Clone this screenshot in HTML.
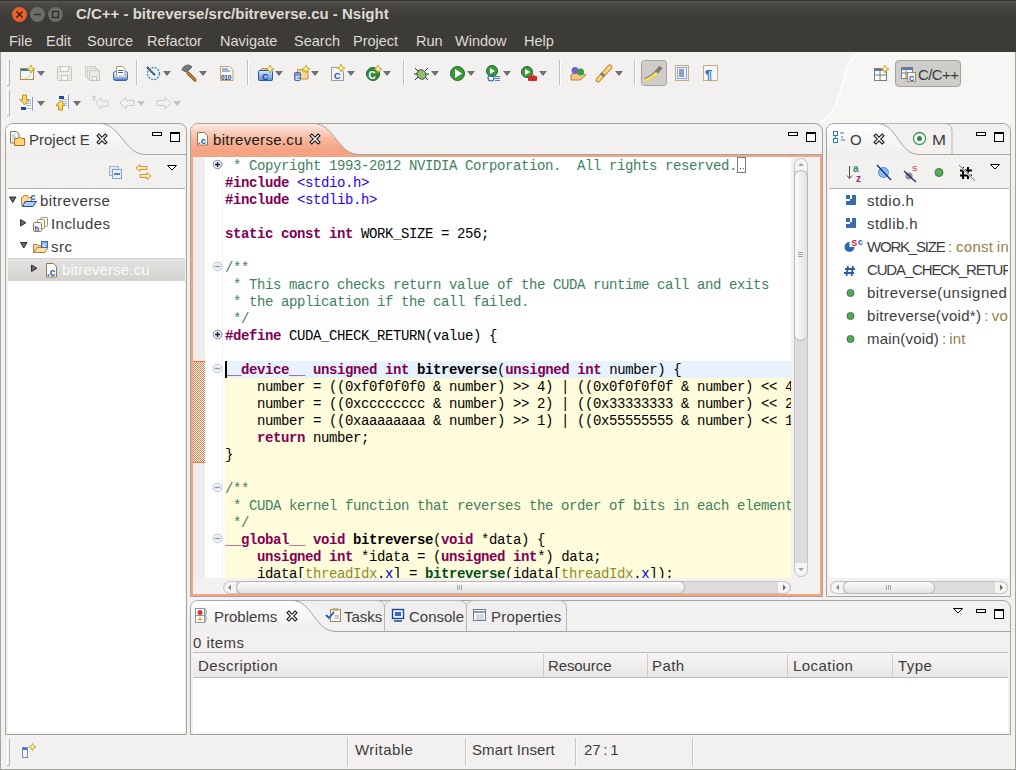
<!DOCTYPE html>
<html><head><meta charset="utf-8">
<style>
*{margin:0;padding:0;box-sizing:border-box}
html,body{width:1016px;height:770px;overflow:hidden;background:#f2f1f0;font-family:"Liberation Sans",sans-serif;position:relative}
.a{position:absolute}
#title{left:0;top:0;width:1016px;height:52px;background:linear-gradient(#353430 0,#353430 1px,#56544f 1px,#56544f 2px,#4a4944 3px,#3c3b37 16px,#3c3b37 52px)}
.wbtn{position:absolute;top:7px;width:15px;height:15px;border-radius:50%}
#ttext{left:76px;top:5px;font-size:15px;font-weight:bold;color:#dfdbd2;white-space:nowrap}
.menu{position:absolute;top:33px;font-size:14.5px;color:#dfdbd2;white-space:nowrap}
.panel{position:absolute;border:1px solid #a8a6a2;background:#fff}
.ui{font-size:15px;letter-spacing:0.45px;color:#3c3c3c;white-space:nowrap;position:absolute}
.code{position:absolute;font-family:"Liberation Mono",monospace;font-size:14px;letter-spacing:-0.4px;white-space:pre;color:#000;line-height:17px}
.k{color:#7f0055;font-weight:bold}
.c{color:#3f7f5f}
.s{color:#2a00ff}
.b{font-weight:bold}
.g{color:#8c8a2c}
.f{color:#0000c0}
.fn{color:#00501e;font-weight:bold}
</style></head><body>
<div id="title" class="a"></div>
<svg class="a" style="left:0;top:0" width="70" height="28">
<circle cx="19.5" cy="14.5" r="7.5" fill="#e8602c"/>
<path d="M16.5 11.5l6 6M22.5 11.5l-6 6" stroke="#3a1a0a" stroke-width="1.3"/>
<circle cx="37.5" cy="14.5" r="7.5" fill="#6e6c67"/>
<path d="M34 14.5h7" stroke="#2e2d2a" stroke-width="1.4"/>
<circle cx="55.5" cy="14.5" r="7.5" fill="#6e6c67"/>
<rect x="52.5" y="11.5" width="6" height="6" fill="none" stroke="#2e2d2a" stroke-width="1.3"/>
</svg>
<div id="ttext" class="a">C/C++ - bitreverse/src/bitreverse.cu - Nsight</div>
<div class="menu" style="left:9px">File</div>
<div class="menu" style="left:46px">Edit</div>
<div class="menu" style="left:87px">Source</div>
<div class="menu" style="left:147px">Refactor</div>
<div class="menu" style="left:220px">Navigate</div>
<div class="menu" style="left:294px">Search</div>
<div class="menu" style="left:353px">Project</div>
<div class="menu" style="left:416px">Run</div>
<div class="menu" style="left:455px">Window</div>
<div class="menu" style="left:524px">Help</div>

<!-- right perspective area -->
<svg class="a" style="left:0;top:52px" width="1016" height="72">
<path d="M820 72 C 845 60, 840 8, 858 2 L1016 2 L1016 72 Z" fill="#f7f6f5"/>
<path d="M820 70 C 845 60, 840 8, 858 2 L1012 2" fill="none" stroke="#fdfdfc" stroke-width="2"/>
</svg>
<!-- toolbar --><svg class="a" style="left:0;top:0" width="1016" height="122"><path d="M7.5 60V85" stroke="#fff"/><path d="M9.5 60V85.5H7" stroke="#b8b6b2" fill="none"/><path d="M7.5 90V115" stroke="#fff"/><path d="M9.5 90V115.5H7" stroke="#b8b6b2" fill="none"/><rect x="20.5" y="68.5" width="13" height="11" fill="#eef5fb" stroke="#a98c45"/><rect x="21" y="69" width="12" height="2" fill="#3c78b8"/><path d="M24 79 Q31 78 31 70" fill="none" stroke="#f0d050" stroke-width="1"/><path d="M31 65L32.2 67.8L35 69L32.2 70.2L31 73L29.8 70.2L27 69L29.8 67.8Z" fill="#fff6b0" stroke="#c9a020" stroke-width="0.9"/><path d="M37 71h8l-4 5z" fill="#707070"/><rect x="57.5" y="66.5" width="14" height="14" rx="1" fill="#eceae7" stroke="#c8c6c2"/><rect x="60.5" y="66.5" width="8" height="5" fill="#f6f5f3" stroke="#c8c6c2"/><rect x="61.5" y="75.5" width="6" height="5" fill="#f6f5f3" stroke="#c8c6c2"/><rect x="85.5" y="66.5" width="10" height="10" fill="#f0eeeb" stroke="#cfcdc9"/><rect x="87.5" y="68.5" width="10" height="10" fill="#f0eeeb" stroke="#cfcdc9"/><rect x="89.5" y="70.5" width="10" height="10" fill="#eceae7" stroke="#c8c6c2"/><rect x="92.5" y="76.5" width="4" height="4" fill="#f6f5f3" stroke="#c8c6c2"/><defs><linearGradient id="prg" x1="0" y1="0" x2="0" y2="1"><stop offset="0" stop-color="#f4f6fa"/><stop offset="0.6" stop-color="#b8c8e8"/><stop offset="1" stop-color="#3a64b0"/></linearGradient></defs><rect x="113.5" y="71.5" width="14" height="9" rx="2" fill="url(#prg)" stroke="#3a64a8"/><path d="M116.5 75.5V66.5h6l2.5 2.5v6.5" fill="#fff" stroke="#a89a70"/><path d="M118 70.5h5M118 72.5h5" stroke="#3a64b0"/><path d="M136.5 60V85" stroke="#c2c0bc"/><path d="M137.5 60V85" stroke="#fff"/><circle cx="153.5" cy="73.5" r="6" fill="#eaf2fa" stroke="#3d88c8" stroke-width="1.4" stroke-dasharray="2 1.2"/><path d="M147 67 L155 75" stroke="#1a3060" stroke-width="2"/><path d="M148 67.5 L155 74.5" stroke="#f0e070" stroke-width="0.8"/><path d="M163 71h8l-4 5z" fill="#707070"/><path d="M188 73 L195 80" stroke="#8a5a20" stroke-width="3.2" stroke-linecap="round"/><path d="M188 73 L195 80" stroke="#c08040" stroke-width="1.6" stroke-linecap="round"/><path d="M182 70 Q183 65 189 65 L192 67 L189 70 L186 72 Z" fill="#7a7a7a" stroke="#505050" stroke-width="0.8"/><path d="M199 71h8l-4 5z" fill="#707070"/><path d="M220.5 66.5h9l3.5 3.5v10.5h-12.5z" fill="#f8f6ee" stroke="#b8a870"/><path d="M222 69h6M222 71h8" stroke="#4a70b0"/><text x="221" y="80" font-family="Liberation Sans" font-weight="bold" font-size="6.5" fill="#1a3a7a" letter-spacing="-0.3">010</text><path d="M247.5 60V85" stroke="#c2c0bc"/><path d="M248.5 60V85" stroke="#fff"/><defs><linearGradient id="cpg" x1="0" y1="0" x2="0" y2="1"><stop offset="0" stop-color="#d8e8fa"/><stop offset="1" stop-color="#5a90d8"/></linearGradient></defs><path d="M259 71 L262 68.5 L267 68.5 L268 71" fill="#e8c880" stroke="#c08040" stroke-width="0.8"/><rect x="258.5" y="70.5" width="14" height="10" rx="1" fill="url(#cpg)" stroke="#2a58a8"/><text x="262" y="79.5" font-family="Liberation Sans" font-weight="bold" font-size="9" fill="#1a4a98">C</text><path d="M270 65L271.2 67.8L274 69L271.2 70.2L270 73L268.8 70.2L266 69L268.8 67.8Z" fill="#fff6b0" stroke="#c9a020" stroke-width="0.9"/><path d="M275 71h8l-4 5z" fill="#707070"/><path d="M297.5 69.5h4l1 1.5h5.5v8h-10.5z" fill="#f4d890" stroke="#c09040"/><rect x="294.5" y="72.5" width="6" height="8" rx="1" fill="#7a9ad8" stroke="#4a6ab0"/><text x="295.5" y="79.5" font-family="Liberation Sans" font-weight="bold" font-size="6" fill="#fff">C</text><path d="M306 65L307.2 67.8L310 69L307.2 70.2L306 73L304.8 70.2L302 69L304.8 67.8Z" fill="#fff6b0" stroke="#c9a020" stroke-width="0.9"/><path d="M311 71h8l-4 5z" fill="#707070"/><path d="M331.5 67.5h8l4 4v9h-12z" fill="#eef2fa" stroke="#a09a80"/><text x="334" y="79" font-family="Liberation Sans" font-weight="bold" font-size="9" fill="#2a48c0">C</text><path d="M341 64L342.2 66.8L345 68L342.2 69.2L341 72L339.8 69.2L337 68L339.8 66.8Z" fill="#fff6b0" stroke="#c9a020" stroke-width="0.9"/><path d="M347 71h8l-4 5z" fill="#707070"/><circle cx="373" cy="74" r="6.5" fill="#2a8a3a" stroke="#1a6a2a"/><text x="368.5" y="78.5" font-family="Liberation Sans" font-weight="bold" font-size="10" fill="#fff">C</text><path d="M378 65L379.2 67.8L382 69L379.2 70.2L378 73L376.8 70.2L374 69L376.8 67.8Z" fill="#fff6b0" stroke="#c9a020" stroke-width="0.9"/><path d="M383 71h8l-4 5z" fill="#707070"/><path d="M403.5 60V85" stroke="#c2c0bc"/><path d="M404.5 60V85" stroke="#fff"/><path d="M415 68 L418 71 M428 68 L425 71 M414 74 h3 M426 74 h3 M415 80 L418 77 M428 80 L425 77" stroke="#203030" stroke-width="1"/><ellipse cx="421.5" cy="74.5" rx="4.2" ry="5" fill="#8ec070" stroke="#305030" stroke-width="0.9" transform="rotate(-35 421.5 74.5)"/><path d="M431 71h8l-4 5z" fill="#707070"/><circle cx="457.5" cy="73.5" r="7" fill="#3a9a3a" stroke="#1f6a1f"/><path d="M455 69 L462 73.5 L455 78 Z" fill="#fff"/><path d="M467 71h8l-4 5z" fill="#707070"/><circle cx="492" cy="71" r="5.5" fill="#3a9a3a" stroke="#1f6a1f"/><path d="M490 68 L495 71 L490 74 Z" fill="#fff"/><circle cx="491" cy="78" r="3" fill="none" stroke="#2a6ac0" stroke-width="1.1"/><path d="M495 76.5h5M495 78.5h5M495 80.5h5" stroke="#5a7ac0" stroke-width="1"/><path d="M503 71h8l-4 5z" fill="#707070"/><circle cx="527" cy="72" r="5.5" fill="#3a9a3a" stroke="#1f6a1f"/><path d="M525 69 L530 72 L525 75 Z" fill="#fff"/><rect x="528" y="76" width="9" height="5" rx="1" fill="#d02a2a"/><path d="M531 76 v-1 h3 v1" stroke="#d02a2a" fill="none"/><path d="M539 71h8l-4 5z" fill="#707070"/><path d="M559.5 60V85" stroke="#c2c0bc"/><path d="M560.5 60V85" stroke="#fff"/><path d="M571 75 L577 72 L586 75 L580 80 L571 80 Z" fill="#f0c878" stroke="#b07830" stroke-width="0.9"/><circle cx="575" cy="70.5" r="3.5" fill="#7060c8"/><circle cx="580.5" cy="72" r="3.5" fill="#3a9a4a"/><path d="M598 80 L610 67" stroke="#c08a30" stroke-width="5" stroke-linecap="round"/><path d="M598 80 L610 67" stroke="#f8d880" stroke-width="3" stroke-linecap="round"/><path d="M601 73 L604 76" stroke="#808080" stroke-width="3"/><path d="M615 71h8l-4 5z" fill="#707070"/><path d="M634.5 60V85" stroke="#c2c0bc"/><path d="M635.5 60V85" stroke="#fff"/><rect x="641.5" y="60.5" width="25" height="25" rx="3" fill="#cfcdca" stroke="#a4a29e"/><path d="M645 80 L653 76 L661 67" stroke="#7a7a70" stroke-width="4"/><path d="M644 81 L652 77 L657 73" stroke="#f8e060" stroke-width="3"/><rect x="675.5" y="65.5" width="13" height="15" fill="#eef2fa" stroke="#c0b080"/><rect x="677.5" y="67.5" width="9" height="11" fill="none" stroke="#3a5aa8" stroke-dasharray="1 1"/><path d="M679 70h5M679 72h5M679 74h5M679 76h5" stroke="#2a4a98"/><rect x="703.5" y="65.5" width="14" height="15" fill="#f4f6fa" stroke="#c0b080"/><text x="705" y="79" font-family="Liberation Sans" font-weight="bold" font-size="13" fill="#3a6ab8">¶</text><rect x="874.5" y="68.5" width="12" height="12" fill="#fff" stroke="#7a7a78"/><rect x="875" y="69" width="11" height="2" fill="#4a80c8"/><path d="M880 69v11M875 75h11" stroke="#7a7a78"/><path d="M885 65L886.2 67.8L889 69L886.2 70.2L885 73L883.8 70.2L881 69L883.8 67.8Z" fill="#fff6b0" stroke="#c9a020" stroke-width="0.9"/><rect x="895.5" y="60.5" width="65" height="26" rx="3.5" fill="#cfcdca" stroke="#a4a29e"/><rect x="901.5" y="67.5" width="11" height="11" fill="#fff" stroke="#7a7a78"/><rect x="902" y="68" width="10" height="2" fill="#4a80c8"/><path d="M906 68v10M902 73h10" stroke="#7a7a78"/><rect x="907.5" y="72.5" width="8" height="9" fill="#eef2fa" stroke="#a09060"/><text x="909" y="80.5" font-family="Liberation Sans" font-weight="bold" font-size="7" fill="#2a58b8">C</text><rect x="21" y="97" width="12" height="14" fill="#f4f7fb"/><path d="M32.5 97v14" stroke="#8aa0c0"/><path d="M26 99.5h5M26 101.5h5M26 103.5h5M26 105.5h5M23 108.5h8" stroke="#a8bcd8"/><rect x="21" y="107" width="5" height="3" fill="#1a4a98"/><path d="M20 99.5h2.5v-4.5h4v4.5h2.5l-4.5 5.5z" fill="#fcd868" stroke="#c08818" stroke-width="0.9"/><path d="M37 101h8l-4 5z" fill="#707070"/><rect x="57" y="95" width="12" height="14" fill="#f4f7fb"/><path d="M68.5 95v14" stroke="#8aa0c0"/><path d="M62 99.5h5M62 101.5h5M62 103.5h5M62 105.5h5" stroke="#a8bcd8"/><rect x="59" y="96" width="5" height="3" fill="#1a4a98"/><path d="M56 105.5h2.5v4.5h4v-4.5h2.5l-4.5 -5.5z" fill="#fcd868" stroke="#c08818" stroke-width="0.9"/><path d="M73 101h8l-4 5z" fill="#707070"/><path d="M96 103 L101 98 V101 H108 V106 H101 V109 Z" fill="#f2f1ef" stroke="#cfcdc9"/><path d="M92 96 l4 4 M96 96 l-4 4 M94 95 v6" stroke="#c8c6c2" stroke-width="0.8"/><path d="M120 103 L126 97 V100.5 H134 V105.5 H126 V109 Z" fill="#f2f1ef" stroke="#cfcdc9"/><path d="M137 101h8l-4 5z" fill="#c5c3bf"/><path d="M171 103 L165 97 V100.5 H157 V105.5 H165 V109 Z" fill="#f2f1ef" stroke="#cfcdc9"/><path d="M173 101h8l-4 5z" fill="#c5c3bf"/><text x="918" y="80" font-family="Liberation Sans" font-size="15" fill="#3c3c3c" letter-spacing="-0.6">C/C++</text></svg><!-- /toolbar -->
<!-- left panel -->
<div class="a" style="left:5px;top:123px;width:182px;height:612px;border:1px solid #a6a49f;border-radius:8px 8px 0 0;background:#f2f1f0"></div>
<svg class="a" style="left:5px;top:123px" width="182" height="66">
<defs><linearGradient id="tg1" x1="0" y1="0" x2="0" y2="1"><stop offset="0" stop-color="#ffffff"/><stop offset="1" stop-color="#efeeec"/></linearGradient></defs>
<path d="M1 31 L1 9 Q1 1 9 1 L95 1 C115 1, 120 31, 140 31 Z" fill="url(#tg1)"/>
<path d="M95 0.5 C115 0.5, 120 31.5, 140 31.5 L181 31.5" fill="none" stroke="#a6a49f" stroke-width="1"/>
</svg>
<div class="a" style="left:8px;top:188px;width:177px;height:545px;background:#fff;border-top:1px solid #b5b3af"></div>
<!-- editor panel -->
<div class="a" style="left:190px;top:123px;width:633px;height:474px;border:1px solid #a6a49f;border-radius:8px 8px 0 0;background:#f2f1f0"></div>
<svg class="a" style="left:190px;top:123px" width="633" height="36">
<defs><linearGradient id="tg2" x1="0" y1="0" x2="0" y2="1"><stop offset="0" stop-color="#fcebe4"/><stop offset="0.5" stop-color="#f6b498"/><stop offset="0.8" stop-color="#f4a383"/><stop offset="1" stop-color="#f4a383"/></linearGradient></defs>
<path d="M1 33 L1 9 Q1 1 9 1 L124 1 C144 1, 148 31, 168 31 L168 34 L1 34 Z" fill="url(#tg2)"/>
<path d="M124 0.5 C144 0.5, 148 31.5, 168 31.5 L632 31.5" fill="none" stroke="#a6a49f" stroke-width="1"/>
</svg>
<div class="a" style="left:191px;top:155px;width:631px;height:441px;border:2px solid #f4a383;background:#fff"></div>

<!-- editor content -->
<div class="a" style="left:193px;top:157px;width:12px;height:421px;background:#efeeed"></div>
<div class="a" style="left:193px;top:361px;width:12px;height:102px;border-top:1px solid #f07a3c;border-bottom:1px solid #f07a3c;background:repeating-conic-gradient(#f07a3c 0 25%,#fff 0 50%) 0 0/2px 2px"></div>
<div class="a" style="left:222px;top:157px;width:1px;height:421px;background:#f0f0f0"></div>
<div class="a" style="left:225px;top:361px;width:566px;height:217px;background:#fffcdc"></div>
<div class="a" style="left:225px;top:361px;width:566px;height:17px;background:#e8f2fe"></div>
<div class="a" style="left:223px;top:157px;width:568px;height:421px;overflow:hidden">
<div class="code" style="left:2px;top:1px"><span class="c"> * Copyright 1993-2012 NVIDIA Corporation.  All rights reserved.</span>
<span class="k">#include</span> <span class="s">&lt;stdio.h&gt;</span>
<span class="k">#include</span> <span class="s">&lt;stdlib.h&gt;</span>

<span class="k">static</span> <span class="k">const</span> <span class="k">int</span> WORK_SIZE = 256;

<span class="c">/**</span>
<span class="c"> * This macro checks return value of the CUDA runtime call and exits</span>
<span class="c"> * the application if the call failed.</span>
<span class="c"> */</span>
<span class="k">#define</span> CUDA_CHECK_RETURN(value) {

<span class="k">__device__</span> <span class="k">unsigned</span> <span class="k">int</span> <span class="b">bitreverse</span>(<span class="k">unsigned</span> <span class="k">int</span> number) {
    number = ((0xf0f0f0f0 &amp; number) &gt;&gt; 4) | ((0x0f0f0f0f &amp; number) &lt;&lt; 4);
    number = ((0xcccccccc &amp; number) &gt;&gt; 2) | ((0x33333333 &amp; number) &lt;&lt; 2);
    number = ((0xaaaaaaaa &amp; number) &gt;&gt; 1) | ((0x55555555 &amp; number) &lt;&lt; 1);
    <span class="k">return</span> number;
}

<span class="c">/**</span>
<span class="c"> * CUDA kernel function that reverses the order of bits in each element of the array.</span>
<span class="c"> */</span>
<span class="k">__global__</span> <span class="k">void</span> <span class="b">bitreverse</span>(<span class="k">void</span> *data) {
    <span class="k">unsigned</span> <span class="k">int</span> *idata = (<span class="k">unsigned</span> <span class="k">int</span>*) data;
    idata[<span class="g">threadIdx</span>.<span class="f">x</span>] = <span class="fn">bitreverse</span>(idata[<span class="g">threadIdx</span>.<span class="f">x</span>]);</div>
<div class="a" style="left:514px;top:0px;width:9px;height:16px;border:1px solid #7a7a7a"></div><div class="a" style="left:517px;top:11px;width:1px;height:1px;background:#555"></div><div class="a" style="left:520px;top:11px;width:1px;height:1px;background:#555"></div>
<div class="a" style="left:2px;top:204px;width:2px;height:17px;background:#000"></div>
</div>
<!-- outline panel -->
<div class="a" style="left:826px;top:123px;width:185px;height:474px;border:1px solid #a6a49f;border-radius:8px 8px 0 0;background:#f2f1f0"></div>
<svg class="a" style="left:826px;top:123px" width="185" height="66">
<defs><linearGradient id="tg3" x1="0" y1="0" x2="0" y2="1"><stop offset="0" stop-color="#ffffff"/><stop offset="1" stop-color="#efeeec"/></linearGradient></defs>
<path d="M51 0.5 L118 0.5 Q126 0.5 126 8 L126 31" fill="none" stroke="#b9b7b3" stroke-width="1"/>
<path d="M1 31 L1 9 Q1 1 9 1 L51 1 C71 1, 73 31, 93 31 Z" fill="url(#tg3)"/>
<path d="M51 0.5 C71 0.5, 73 31.5, 93 31.5 L184 31.5" fill="none" stroke="#a6a49f" stroke-width="1"/>
</svg>
<div class="a" style="left:829px;top:188px;width:180px;height:390px;background:#fff;border-top:1px solid #b5b3af"></div>
<!-- problems panel -->
<div class="a" style="left:190px;top:600px;width:821px;height:135px;border:1px solid #a6a49f;border-radius:8px 8px 0 0;background:#f2f1f0"></div>

<div class="a" style="left:8px;top:258px;width:177px;height:23px;background:linear-gradient(#e4e3e1,#d3d2cf);border-top:1px solid #d2d1ce"></div>
<!-- chrome --><svg class="a" style="left:0;top:0" width="1016" height="770"><path d="M10.5 131.5h6l2.5 2.5v9h-8.5z" fill="#f4f6fa" stroke="#8a7a50"/><path d="M12 135h3M12 137h4M12 139h1M12 141h1" stroke="#8aa0d0" stroke-width="0.8"/><path d="M14.5 138.5h3l1 -1h2l1 1h3v7h-10z" fill="#fcd87a" stroke="#b86a20"/><path d="M98.8 135.8L105.2 142.2M105.2 135.8L98.8 142.2" stroke="#111" stroke-width="3.6" stroke-linecap="square"/><path d="M98.8 135.8L105.2 142.2M105.2 135.8L98.8 142.2" stroke="#fff" stroke-width="1.5" stroke-linecap="square"/><rect x="152.5" y="132.5" width="9" height="3" fill="#fff" stroke="#000"/><rect x="170.5" y="132.5" width="9" height="9" fill="#fff" stroke="#000"/><path d="M170 133.5h10" stroke="#000"/><rect x="109.5" y="166.5" width="9" height="9" fill="#dce8f4" stroke="#a0b4cc"/><rect x="112.5" y="169.5" width="9" height="9" fill="#e4f0fa" stroke="#8aa0bc"/><path d="M114 174h6" stroke="#1a4a8a" stroke-width="1.3"/><path d="M136 168 L140 164.5 V166.5 H147 V169.5 H140 V171.5 Z" fill="#fbe8a8" stroke="#c09030" stroke-width="0.9"/><path d="M151 176 L147 172.5 V174.5 H140 V177.5 H147 V179.5 Z" fill="#fbe8a8" stroke="#c09030" stroke-width="0.9"/><path d="M167.5 165.5h9l-4.5 4.5z" fill="#fff" stroke="#000" stroke-linejoin="round"/><path d="M9.5 197.0h6.5l-3.25 5.5z" fill="#6a6a6a" stroke="#303030" stroke-linejoin="round"/><path d="M21.5 205.5V197.5h1l1 -2h4l1 2h3v8z" fill="#fbdc8c" stroke="#b88a40"/><path d="M22.5 206.5 L25 201.5 H36.5 L33 206.5 Z" fill="#a8d0f8" stroke="#2040b0"/><text x="30.5" y="200" font-family="Liberation Sans" font-weight="bold" font-size="9" fill="#1a5a98">c</text><path d="M20.5 219.5v6.5l5.5 -3.25z" fill="#6a6a6a" stroke="#303030" stroke-linejoin="round"/><rect x="40.5" y="217.5" width="7" height="9" rx="1" fill="#fff" stroke="#a09060"/><rect x="37.5" y="219.5" width="7" height="9" rx="1" fill="#fff" stroke="#a09060"/><rect x="33.5" y="222.5" width="8" height="9" rx="1" fill="#eef2fa" stroke="#a07a40"/><text x="34.5" y="230.5" font-family="Liberation Sans" font-weight="bold" font-size="7.5" fill="#2a4a8a">h</text><path d="M20.5 242.5h6.5l-3.25 5.5z" fill="#6a6a6a" stroke="#303030" stroke-linejoin="round"/><path d="M33.5 244.5h4l1 1h6v7h-11z" fill="#f8d890" stroke="#b08040"/><path d="M34 252.5 L37 247.5 H48 L45 252.5 Z" fill="#fce0a0" stroke="#b08040"/><rect x="41.5" y="241.5" width="6" height="6" fill="#8ab0e8" stroke="#3a68b8"/><text x="42.5" y="247" font-family="Liberation Sans" font-weight="bold" font-size="6" fill="#fff">c</text><path d="M31.5 265.0v6.5l5.5 -3.25z" fill="#6a6a6a" stroke="#303030" stroke-linejoin="round"/><path d="M46.5 263.5h7l3 3v10.5h-10z" fill="#fff" stroke="#8a7a50"/><text x="47" y="275.5" font-family="Liberation Sans" font-weight="bold" font-size="10" fill="#2a58a8">.c</text><path d="M197.5 132.5h7l3 3v9.5h-10z" fill="#fff" stroke="#8a7a50"/><text x="198" y="143.5" font-family="Liberation Sans" font-weight="bold" font-size="9.5" fill="#2a58a8">.c</text><path d="M311.8 135.8L318.2 142.2M318.2 135.8L311.8 142.2" stroke="#111" stroke-width="3.6" stroke-linecap="square"/><path d="M311.8 135.8L318.2 142.2M318.2 135.8L311.8 142.2" stroke="#fff" stroke-width="1.5" stroke-linecap="square"/><rect x="788.5" y="132.5" width="9" height="3" fill="#fff" stroke="#000"/><rect x="806.5" y="132.5" width="9" height="9" fill="#fff" stroke="#000"/><path d="M806 133.5h10" stroke="#000"/><circle cx="217.5" cy="164.5" r="4.3" fill="#e4eaf4" stroke="#8090a8"/><path d="M215 164.5h5M217.5 162.0v5" stroke="#1a2030" stroke-width="1.3"/><circle cx="217.5" cy="266.5" r="4.3" fill="#eef3fa" stroke="#bcc6d4"/><path d="M215 266.5h5" stroke="#8a96aa" stroke-width="1.3"/><circle cx="217.5" cy="334.5" r="4.3" fill="#e4eaf4" stroke="#8090a8"/><path d="M215 334.5h5M217.5 332.0v5" stroke="#1a2030" stroke-width="1.3"/><circle cx="217.5" cy="368.5" r="4.3" fill="#eef3fa" stroke="#bcc6d4"/><path d="M215 368.5h5" stroke="#8a96aa" stroke-width="1.3"/><circle cx="217.5" cy="487.5" r="4.3" fill="#eef3fa" stroke="#bcc6d4"/><path d="M215 487.5h5" stroke="#8a96aa" stroke-width="1.3"/><circle cx="217.5" cy="538.5" r="4.3" fill="#eef3fa" stroke="#bcc6d4"/><path d="M215 538.5h5" stroke="#8a96aa" stroke-width="1.3"/><defs><linearGradient id="thh" x1="0" y1="0" x2="0" y2="1"><stop offset="0" stop-color="#fdfdfc"/><stop offset="1" stop-color="#e2e1df"/></linearGradient><linearGradient id="thv" x1="0" y1="0" x2="1" y2="0"><stop offset="0" stop-color="#fdfdfc"/><stop offset="1" stop-color="#e2e1df"/></linearGradient></defs><rect x="791" y="157" width="29" height="421" fill="#f2f1f0"/><rect x="794.5" y="158.5" width="13" height="418" rx="6.5" fill="#dedcda"/><path d="M794.5 171 V165 A6.5 6.5 0 0 1 807.5 165 V171 Z" fill="#f6f5f4"/><path d="M794.5 563 V570 A6.5 6.5 0 0 0 807.5 570 V563 Z" fill="#f6f5f4"/><rect x="794.5" y="158.5" width="13" height="418" rx="6.5" fill="none" stroke="#c6c4c0"/><rect x="794.5" y="170.5" width="13" height="170" rx="6.5" fill="url(#thv)" stroke="#b8b6b2"/><path d="M798 166h6l-3 -3z" fill="#a6a4a0"/><path d="M798 568h6l-3 3z" fill="#a6a4a0"/><path d="M798 252.5h5M798 254.5h5M798 256.5h5" stroke="#a8a6a2"/><rect x="193" y="578" width="627" height="16" fill="#f2f1f0"/><rect x="223.5" y="581.5" width="567" height="12" rx="6" fill="#dedcda"/><path d="M236 582 H230 A5.5 5.5 0 0 0 230 593 H236 Z" fill="#f6f5f4"/><path d="M778 582 H784 A5.5 5.5 0 0 1 784 593 H778 Z" fill="#f6f5f4"/><rect x="223.5" y="581.5" width="567" height="12" rx="6" fill="none" stroke="#c6c4c0"/><rect x="236.5" y="581.5" width="448" height="12" rx="6" fill="url(#thh)" stroke="#b8b6b2"/><path d="M231 584.5v6l-3 -3z" fill="#8a8884"/><path d="M783 584.5v6l3 -3z" fill="#6a6864"/><path d="M457.5 585v5M459.5 585v5M461.5 585v5" stroke="#a8a6a2"/><rect x="833.5" y="131.5" width="4" height="4" fill="#fff" stroke="#2a78c8"/><rect x="833.5" y="138.5" width="4" height="4" fill="#fff" stroke="#2a78c8"/><path d="M840 133h4M841 137h2M841 140h4" stroke="#2a78c8" stroke-width="1.2"/><path d="M835.5 136v2" stroke="#2a78c8"/><path d="M875.8 135.8L882.2 142.2M882.2 135.8L875.8 142.2" stroke="#111" stroke-width="3.6" stroke-linecap="square"/><path d="M875.8 135.8L882.2 142.2M882.2 135.8L875.8 142.2" stroke="#fff" stroke-width="1.5" stroke-linecap="square"/><circle cx="919.5" cy="138.5" r="6" fill="#fff" stroke="#3a9a5a" stroke-width="1.3"/><circle cx="919.5" cy="138.5" r="2.5" fill="#2a8a4a"/><rect x="976.5" y="132.5" width="9" height="3" fill="#fff" stroke="#000"/><rect x="994.5" y="132.5" width="9" height="9" fill="#fff" stroke="#000"/><path d="M994 133.5h10" stroke="#000"/><path d="M849.5 166v12M847 175.5l2.5 3l2.5 -3" stroke="#505050" fill="none"/><text x="853" y="172" font-family="Liberation Sans" font-weight="bold" font-size="10" fill="#2a8a7a">a</text><text x="856" y="182" font-family="Liberation Sans" font-weight="bold" font-size="10" fill="#8a2a9a">z</text><circle cx="883.5" cy="172.5" r="5" fill="#8ac0f0" stroke="#4a90d0"/><path d="M877 165 L891 180" stroke="#1a2a7a" stroke-width="1.3"/><circle cx="909" cy="176" r="3.5" fill="#909090"/><path d="M904 171 L916 182" stroke="#1a2a7a" stroke-width="1.3"/><text x="912" y="171" font-family="Liberation Sans" font-size="8" fill="#d02030">S</text><circle cx="939" cy="172.5" r="4" fill="#5aa860" stroke="#3a8040"/><path d="M963 167v12M968 167v12M960 170.5h12M960 175.5h12" stroke="#000" stroke-width="2"/><path d="M959 165 L975 181" stroke="#f2f1f0" stroke-width="2"/><path d="M959 165 L975 181" stroke="#555" stroke-width="0.8"/><path d="M990.5 164.5h9l-4.5 4.5z" fill="#fff" stroke="#000" stroke-linejoin="round"/><rect x="846" y="195" width="4" height="4" fill="#3a6ab0"/><rect x="850" y="199" width="6" height="6" fill="#3a6ab0"/><rect x="846" y="201" width="4" height="4" fill="#3a6ab0"/><rect x="852" y="195" width="4" height="4" fill="#3a6ab0"/><rect x="846" y="218" width="4" height="4" fill="#3a6ab0"/><rect x="850" y="222" width="6" height="6" fill="#3a6ab0"/><rect x="846" y="224" width="4" height="4" fill="#3a6ab0"/><rect x="852" y="218" width="4" height="4" fill="#3a6ab0"/><circle cx="849.5" cy="247" r="5" fill="#2a68b8"/><path d="M849.5 242 A5 5 0 0 1 854.5 247 H849.5Z" fill="#fff"/><text x="851.5" y="246" font-family="Liberation Sans" font-weight="bold" font-size="8.5" fill="#d02030">S</text><text x="858" y="245" font-family="Liberation Sans" font-weight="bold" font-size="8.5" fill="#2a58a8">c</text><path d="M848 266l-1.5 10M853 266l-1.5 10M845 269h10M844 273h10" stroke="#2a5aa8" stroke-width="1.8"/><circle cx="850.5" cy="293" r="3.5" fill="#5aa860" stroke="#3a7a40"/><circle cx="850.5" cy="316" r="3.5" fill="#5aa860" stroke="#3a7a40"/><circle cx="850.5" cy="339" r="3.5" fill="#5aa860" stroke="#3a7a40"/><rect x="828" y="578" width="182" height="17" fill="#f2f1f0"/><rect x="830.5" y="581.5" width="177" height="12" rx="6" fill="#dedcda"/><path d="M843 582 H837 A5.5 5.5 0 0 0 837 593 H843 Z" fill="#f6f5f4"/><path d="M995 582 H1001 A5.5 5.5 0 0 1 1001 593 H995 Z" fill="#f6f5f4"/><rect x="830.5" y="581.5" width="177" height="12" rx="6" fill="none" stroke="#c6c4c0"/><rect x="843.5" y="581.5" width="91" height="12" rx="6" fill="url(#thh)" stroke="#b8b6b2"/><path d="M839 584.5v6l-3 -3z" fill="#8a8884"/><path d="M1000 584.5v6l3 -3z" fill="#6a6864"/><path d="M886.5 585v5M888.5 585v5M890.5 585v5" stroke="#a8a6a2"/><path d="M466.5 631V608 Q466.5 600.5 474 600.5 H558 Q566.5 600.5 566.5 608 V631" fill="#f0efed" stroke="#b9b7b3"/><path d="M384.5 631V608 Q384.5 600.5 392 600.5 H458 Q466.5 600.5 466.5 608 V631" fill="#f0efed" stroke="#b9b7b3"/><path d="M300 600.5 H376 Q384.5 600.5 384.5 608 V631" fill="#f0efed" stroke="#b9b7b3"/><defs><linearGradient id="pg" x1="0" y1="0" x2="0" y2="1"><stop offset="0" stop-color="#fff"/><stop offset="1" stop-color="#efeeec"/></linearGradient></defs><path d="M191 631 V609 Q191 601 199 601 H292 C312 601, 315 631, 336 631 Z" fill="url(#pg)"/><path d="M292 600.5 C312 600.5, 315 631.5, 336 631.5 H1010" fill="none" stroke="#a6a49f"/><rect x="195.5" y="608.5" width="9" height="14" fill="#fff" stroke="#8a94aa"/><circle cx="200" cy="612.5" r="2.5" fill="#e03030"/><path d="M197.5 620.5 l2.5 -4 l2.5 4z" fill="#f0b030"/><path d="M195.5 615.5h9" stroke="#8a94aa"/><path d="M205 609 q3 3 0 6 q3 3 0 7" fill="#eef2fa" stroke="#8a94aa"/><path d="M288.8 612.8L295.2 619.2M295.2 612.8L288.8 619.2" stroke="#111" stroke-width="3.6" stroke-linecap="square"/><path d="M288.8 612.8L295.2 619.2M295.2 612.8L288.8 619.2" stroke="#fff" stroke-width="1.5" stroke-linecap="square"/><rect x="330.5" y="609.5" width="10" height="12" fill="#fbf8ee" stroke="#9a8a60"/><rect x="333" y="608" width="5" height="3" fill="#c0b080"/><path d="M326 615 l3 3 l5 -6" stroke="#1a5ac8" stroke-width="1.8" fill="none"/><path d="M335 616h4M335 618h4" stroke="#7a8ab0" stroke-width="0.8"/><rect x="392.5" y="609.5" width="11" height="9" fill="#eef2fa" stroke="#1a4a98" stroke-width="1.4"/><rect x="395" y="612" width="6" height="4" fill="#3a6ac0"/><path d="M394 621h8" stroke="#1a4a98" stroke-width="1.5"/><rect x="473.5" y="609.5" width="12" height="11" fill="#fff" stroke="#6a7a9a"/><path d="M474 612h11" stroke="#6a7a9a" stroke-width="1.5"/><path d="M476 615h8M476 617h8M476 619h8" stroke="#9aaac8" stroke-width="0.9"/><path d="M953.5 608.5h9l-4.5 4.5z" fill="#fff" stroke="#000" stroke-linejoin="round"/><rect x="976.5" y="609.5" width="9" height="3" fill="#fff" stroke="#000"/><rect x="994.5" y="609.5" width="9" height="9" fill="#fff" stroke="#000"/><path d="M994 610.5h10" stroke="#000"/><path d="M347.5 738V766" stroke="#c8c6c2"/><path d="M348.5 738V766" stroke="#fbfbfa"/><path d="M465.5 738V766" stroke="#c8c6c2"/><path d="M466.5 738V766" stroke="#fbfbfa"/><path d="M575.5 738V766" stroke="#c8c6c2"/><path d="M576.5 738V766" stroke="#fbfbfa"/><path d="M692.5 738V766" stroke="#c8c6c2"/><path d="M693.5 738V766" stroke="#fbfbfa"/><path d="M7.5 739V765" stroke="#fff"/><path d="M9.5 739V765.5H7" stroke="#b8b6b2" fill="none"/><rect x="22.5" y="747.5" width="5" height="10" fill="#eef4fa" stroke="#7a8aa8"/><rect x="23" y="748" width="4" height="2" fill="#3a78c8"/><path d="M32.5 743.5l1.1 2.4l2.4 1.1l-2.4 1.1l-1.1 2.4l-1.1 -2.4l-2.4 -1.1l2.4 -1.1z" fill="#fff6b0" stroke="#c9a020" stroke-width="0.9"/></svg><!-- /chrome -->
<!-- tab labels -->
<div class="ui" style="left:29px;top:131px;letter-spacing:0">Project E</div>
<div class="ui" style="left:213px;top:131px;color:#1a1a1a;letter-spacing:0.3px">bitreverse.cu</div>
<div class="ui" style="left:850px;top:131px">O</div>
<div class="ui" style="left:932px;top:131px;transform:scaleX(1.12);transform-origin:0 0">M</div>
<div class="ui" style="left:214px;top:608px;letter-spacing:0">Problems</div>
<div class="ui" style="left:344px;top:608px;letter-spacing:0">Tasks</div>
<div class="ui" style="left:409px;top:608px;letter-spacing:0">Console</div>
<div class="ui" style="left:491px;top:608px;letter-spacing:0.2px">Properties</div>
<div class="ui" style="left:193px;top:634px">0 items</div>
<!-- tree -->
<div class="ui" style="left:40px;top:192px">bitreverse</div>
<div class="ui" style="left:51px;top:215px">Includes</div>
<div class="ui" style="left:51px;top:238px">src</div>
<div class="ui" style="left:62px;top:261px;color:#fafaf9;letter-spacing:0.15px">bitreverse.cu</div>
<!-- outline list -->
<div class="a" style="left:828px;top:188px;width:180px;height:390px;overflow:hidden">
<div class="ui" style="left:39px;top:4px">stdio.h</div>
<div class="ui" style="left:39px;top:27px">stdlib.h</div>
<div class="ui" style="left:39px;top:50px;letter-spacing:-1.2px;word-spacing:-1px">WORK_SIZE<span style="color:#95804a;letter-spacing:0.3px"> : const int</span></div>
<div class="ui" style="left:39px;top:73px;letter-spacing:-1.15px">CUDA_CHECK_RETURN</div>
<div class="ui" style="left:39px;top:96px">bitreverse(unsigned int)</div>
<div class="ui" style="left:39px;top:119px;letter-spacing:0.3px;word-spacing:-1.5px">bitreverse(void*)<span style="color:#95804a"> : void</span></div>
<div class="ui" style="left:39px;top:142px;letter-spacing:0.2px;word-spacing:-1.5px">main(void)<span style="color:#95804a"> : int</span></div>
</div>
<!-- problems table -->
<div class="a" style="left:193px;top:652px;width:815px;height:81px;background:#fff;border-top:1px solid #bdbbb7"></div>
<div class="a" style="left:193px;top:653px;width:815px;height:25px;background:linear-gradient(#f6f5f4,#e9e8e6);border-bottom:1px solid #bdbbb7"></div>
<div class="a" style="left:543px;top:654px;width:1px;height:23px;background:#cfcdc9"></div>
<div class="a" style="left:647px;top:654px;width:1px;height:23px;background:#cfcdc9"></div>
<div class="a" style="left:787px;top:654px;width:1px;height:23px;background:#cfcdc9"></div>
<div class="a" style="left:892px;top:654px;width:1px;height:23px;background:#cfcdc9"></div>
<div class="ui" style="left:198px;top:657px">Description</div>
<div class="ui" style="left:548px;top:657px;letter-spacing:-0.1px">Resource</div>
<div class="ui" style="left:652px;top:657px">Path</div>
<div class="ui" style="left:793px;top:657px">Location</div>
<div class="ui" style="left:898px;top:657px">Type</div>
<!-- status -->
<div class="ui" style="left:355px;top:741px">Writable</div>
<div class="ui" style="left:472px;top:741px;letter-spacing:0.1px">Smart Insert</div>
<div class="ui" style="left:584px;top:741px;letter-spacing:0;word-spacing:-1.5px">27 : 1</div>
<!-- status bar -->
<div class="a" style="left:0;top:52px;width:1px;height:718px;background:#a6a49f"></div>
<div class="a" style="left:1015px;top:52px;width:1px;height:718px;background:#a6a49f"></div>
<div class="a" style="left:0;top:769px;width:1016px;height:1px;background:#a6a49f"></div>
</body></html>
